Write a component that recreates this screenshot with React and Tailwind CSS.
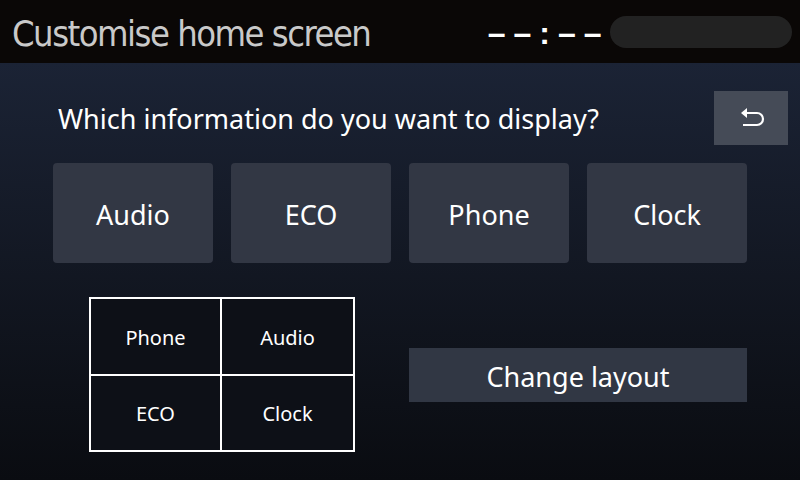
import React from "react"

function App() {
  const options = ["Audio", "ECO", "Phone", "Clock"]
  const layout = ["Phone", "Audio", "ECO", "Clock"]

  return (
    <div className="w-[800px] h-[480px] flex flex-col overflow-hidden font-['Noto_Sans',sans-serif]">
      {/* header */}
      <div className="h-[63px] bg-[#0a0706] flex items-center shrink-0">
        <div className="pl-[12px] pt-[4px] text-[36px] text-[#c9c9c9] tracking-[-1.5px] font-['DejaVu_Sans_Condensed',sans-serif] w-[489px]">
          Customise home screen
        </div>
        <div className="text-white text-[32px] font-bold tracking-[8px] leading-none mt-[2px] font-['Liberation_Sans',sans-serif]">––:––</div>
        <div className="ml-auto mr-[8px] w-[183px] h-[32px] rounded-full bg-[#222222]" />
      </div>

      {/* body */}
      <div className="flex-1 bg-gradient-to-b from-[#1b2335] to-[#0a0c11] flex flex-col">
        <div className="flex items-start pt-[28px] pr-[12px]">
          <div className="pl-[58px] pt-[14px] text-[27px] text-white leading-none">Which information do you want to display?</div>
          <button className="ml-auto w-[74px] h-[54px] bg-[#454b57] flex items-center justify-center">
            <svg width="36" height="24" viewBox="0 0 36 24" fill="none">
              <path d="M8 7 L14 2 L14 12 Z" fill="white" />
              <path d="M12 7 H24 A6 6 0 0 1 24 19 H10" stroke="white" strokeWidth="2.2" />
            </svg>
          </button>
        </div>

        <div className="flex gap-[18px] pl-[53px] mt-[18px]">
          {options.map((o) => (
            <button key={o} className="w-[160px] h-[100px] pt-[4px] rounded-[4px] bg-[#323744] text-white text-[27px]">
              {o}
            </button>
          ))}
        </div>

        <div className="flex items-center pl-[89px] mt-[34px]">
          <div className="grid grid-cols-2 w-[266px] h-[155px] border-2 border-white bg-[#0d1017]">
            {layout.map((l, i) => (
              <div
                key={l}
                className={
                  "flex items-center justify-center pt-[3px] text-white text-[20px] " +
                  (i % 2 === 0 ? "border-r-2 border-white " : "") +
                  (i < 2 ? "border-b-2 border-white" : "")
                }
              >
                {l}
              </div>
            ))}
          </div>
          <button className="ml-[54px] w-[338px] h-[54px] pt-[4px] bg-[#313744] text-white text-[27px] leading-none">
            Change layout
          </button>
        </div>
      </div>
    </div>
  )
}

export default App
